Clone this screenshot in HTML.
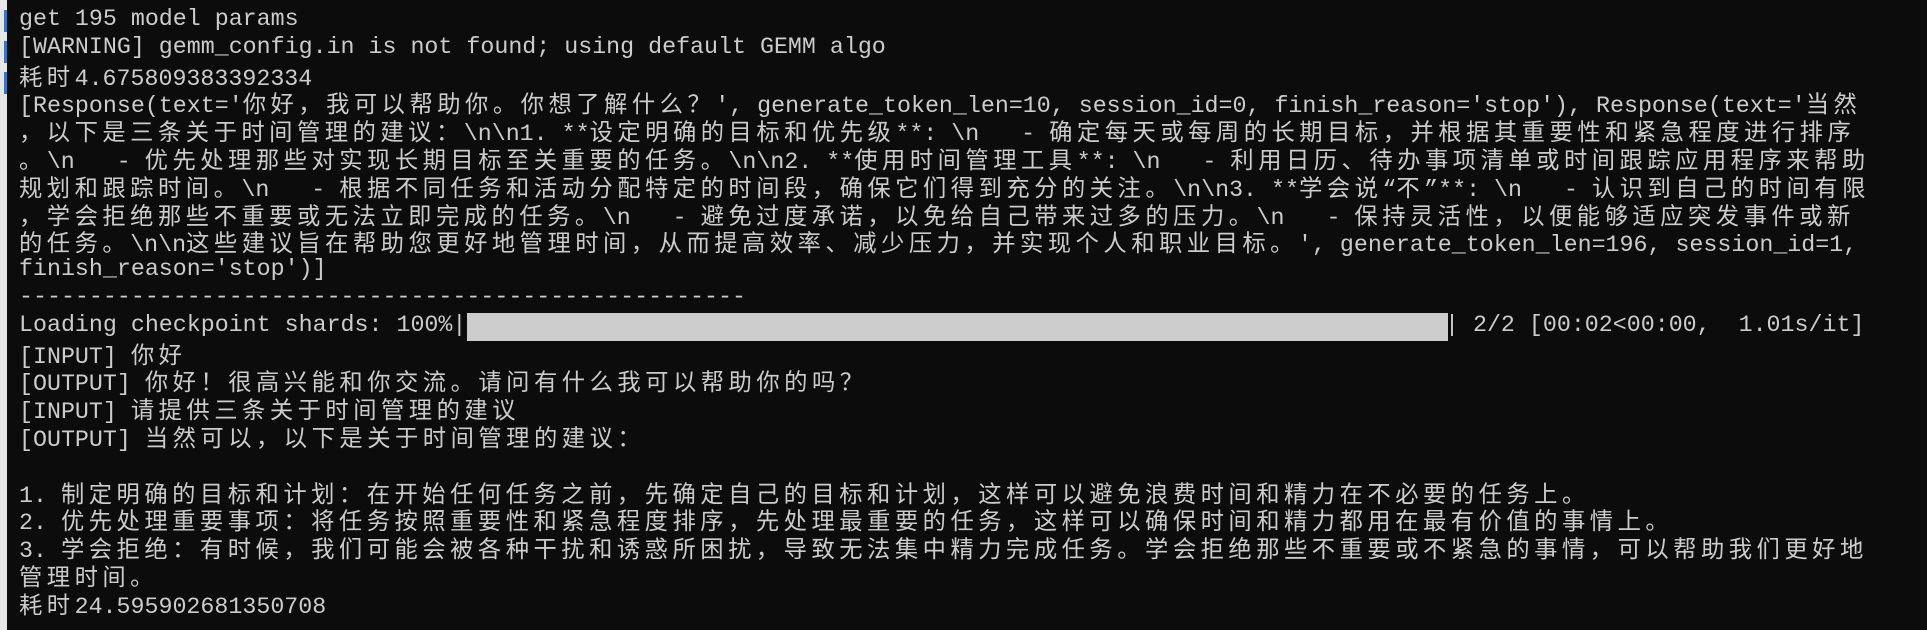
<!DOCTYPE html>
<html><head><meta charset="utf-8"><style>
html,body{margin:0;padding:0;}
body{width:1927px;height:630px;background:#0c0c0c;position:relative;overflow:hidden;}
#strip{position:absolute;left:0;top:0;width:7px;height:630px;background:#e6e6e6;}
.bm{position:absolute;left:4px;width:3px;background:#2b7bd6;}
#t{position:absolute;left:19px;top:6px;font-family:"Liberation Mono","Noto Sans CJK SC",monospace;font-size:23.3px;color:#cccccc;}
#t div{height:27.8px;line-height:27.8px;overflow:visible;white-space:pre;}
.c{font-family:"Noto Sans CJK SC","WenQuanYi Zen Hei",sans-serif;letter-spacing:4.5px;line-height:27.8px;}
#bar{position:absolute;left:467px;top:313px;width:981px;height:28px;background:#cccccc;}
</style></head><body>
<div id="strip"></div>
<div class="bm" style="top:10px;height:22px"></div>
<div class="bm" style="top:41px;height:22px"></div>
<div class="bm" style="top:72px;height:22px"></div>
<div id="bar"></div>
<div id="t"><div>get 195 model params</div><div>[WARNING] gemm_config.in is not found; using default GEMM algo</div><div><span class="c">耗时</span>4.675809383392334</div><div>[Response(text='<span class="c">你好，我可以帮助你。你想了解什么？</span>', generate_token_len=10, session_id=0, finish_reason='stop'), Response(text='<span class="c">当然</span></div><div><span class="c">，以下是三条关于时间管理的建议：</span>\n\n1. **<span class="c">设定明确的目标和优先级</span>**: \n   - <span class="c">确定每天或每周的长期目标，并根据其重要性和紧急程度进行排序</span></div><div><span class="c">。</span>\n   - <span class="c">优先处理那些对实现长期目标至关重要的任务。</span>\n\n2. **<span class="c">使用时间管理工具</span>**: \n   - <span class="c">利用日历、待办事项清单或时间跟踪应用程序来帮助</span></div><div><span class="c">规划和跟踪时间。</span>\n   - <span class="c">根据不同任务和活动分配特定的时间段，确保它们得到充分的关注。</span>\n\n3. **<span class="c">学会说</span>“<span class="c">不</span>”**: \n   - <span class="c">认识到自己的时间有限</span></div><div><span class="c">，学会拒绝那些不重要或无法立即完成的任务。</span>\n   - <span class="c">避免过度承诺，以免给自己带来过多的压力。</span>\n   - <span class="c">保持灵活性，以便能够适应突发事件或新</span></div><div><span class="c">的任务。</span>\n\n<span class="c">这些建议旨在帮助您更好地管理时间，从而提高效率、减少压力，并实现个人和职业目标。</span>', generate_token_len=196, session_id=1,</div><div>finish_reason='stop')]</div><div>----------------------------------------------------</div><div>Loading checkpoint shards: 100%|                                                                      | 2/2 [00:02&lt;00:00,  1.01s/it]</div><div>[INPUT] <span class="c">你好</span></div><div>[OUTPUT] <span class="c">你好！很高兴能和你交流。请问有什么我可以帮助你的吗？</span></div><div>[INPUT] <span class="c">请提供三条关于时间管理的建议</span></div><div>[OUTPUT] <span class="c">当然可以，以下是关于时间管理的建议：</span></div><div> </div><div>1. <span class="c">制定明确的目标和计划：在开始任何任务之前，先确定自己的目标和计划，这样可以避免浪费时间和精力在不必要的任务上。</span></div><div>2. <span class="c">优先处理重要事项：将任务按照重要性和紧急程度排序，先处理最重要的任务，这样可以确保时间和精力都用在最有价值的事情上。</span></div><div>3. <span class="c">学会拒绝：有时候，我们可能会被各种干扰和诱惑所困扰，导致无法集中精力完成任务。学会拒绝那些不重要或不紧急的事情，可以帮助我们更好地</span></div><div><span class="c">管理时间。</span></div><div><span class="c">耗时</span>24.595902681350708</div></div>
</body></html>
